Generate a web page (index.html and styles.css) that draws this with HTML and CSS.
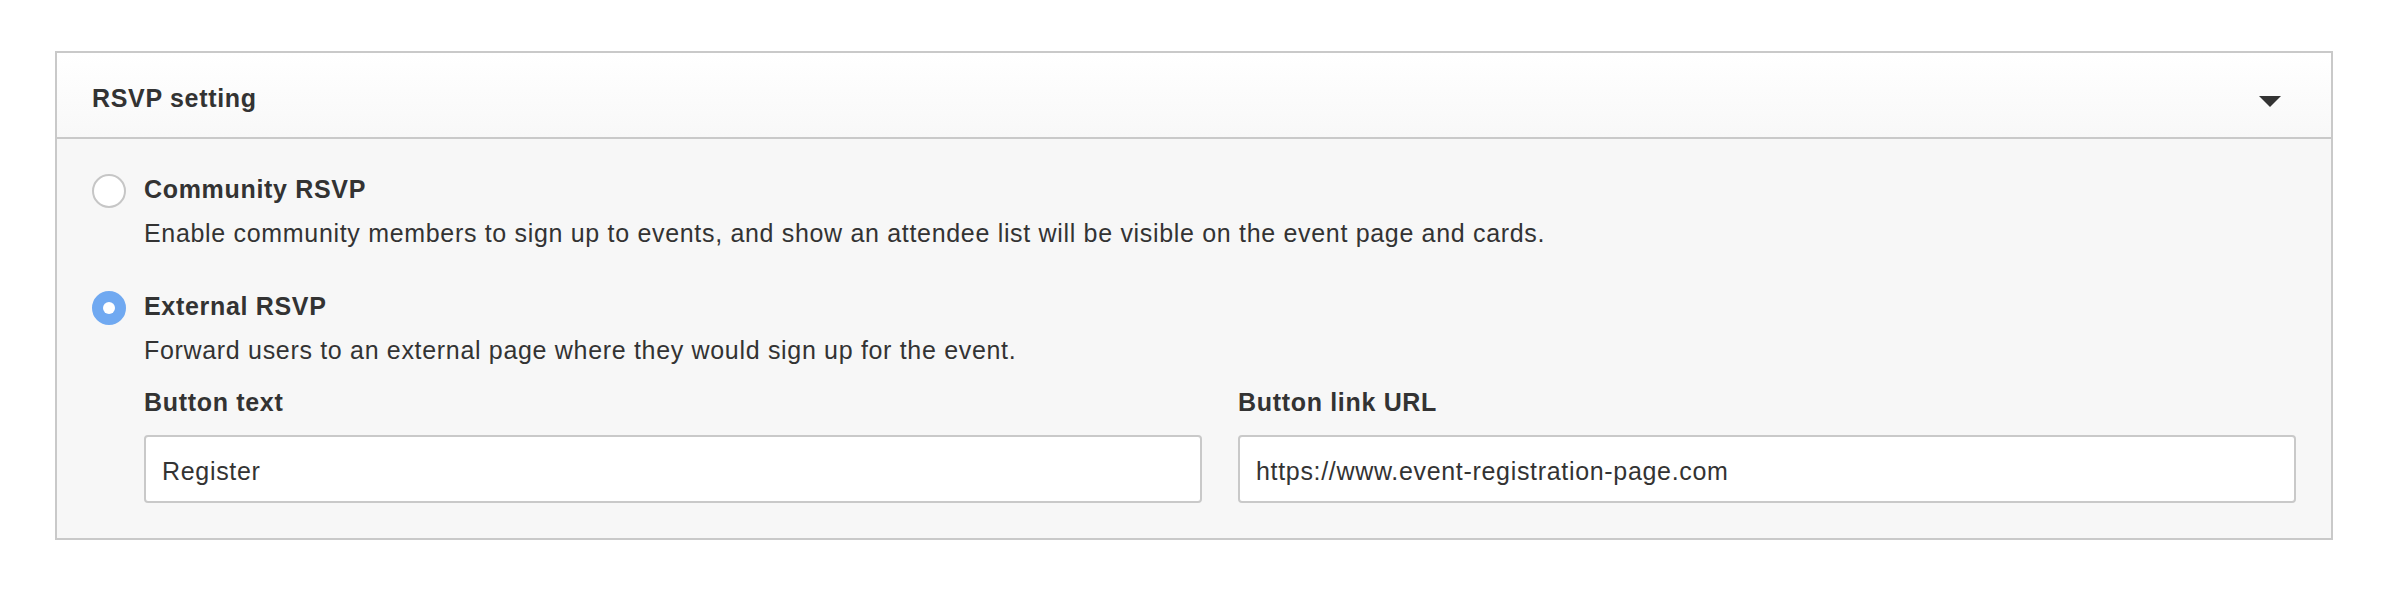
FILE: index.html
```html
<!DOCTYPE html>
<html lang="en">
<head>
<meta charset="utf-8">
<title>RSVP setting</title>
<link rel="stylesheet" href="styles.css">
</head>
<body>
<section class="panel">
  <header class="panel-header">
    <h2 class="panel-title">RSVP setting</h2>
    <svg class="caret" width="22" height="11" viewBox="0 0 22 11" aria-hidden="true"><path d="M0 0 H22 L11 11 Z" fill="#333"/></svg>
  </header>
  <div class="panel-body">
    <div class="option">
      <span class="radio"></span>
      <div class="option-text">
        <div class="option-title">Community RSVP</div>
        <div class="option-desc">Enable community members to sign up to events, and show an attendee list will be visible on the event page and cards.</div>
      </div>
    </div>
    <div class="option option-second">
      <span class="radio radio-checked"></span>
      <div class="option-text">
        <div class="option-title">External RSVP</div>
        <div class="option-desc">Forward users to an external page where they would sign up for the event.</div>
        <div class="fields">
          <label class="field">
            <span class="field-label">Button text</span>
            <input class="field-input" type="text" value="Register">
          </label>
          <label class="field">
            <span class="field-label">Button link URL</span>
            <input class="field-input" type="text" value="https://www.event-registration-page.com">
          </label>
        </div>
      </div>
    </div>
  </div>
</section>
</body>
</html>
```
FILE: styles.css
```css
* { box-sizing: border-box; }

html, body {
  margin: 0;
  background: #ffffff;
}

body {
  font-family: "Liberation Sans", Arial, Helvetica, sans-serif;
  font-size: 25px;
  letter-spacing: 0.68px;
  color: #333333;
  padding: 51px 53px 0 55px;
}

.panel {
  border: 2px solid #c9c9c9;
  background: #f7f7f7;
}

.panel-header {
  display: flex;
  align-items: center;
  justify-content: space-between;
  padding: 25px 50px 19px 35px;
  border-bottom: 2px solid #c9c9c9;
  background: linear-gradient(#ffffff, #f8f8f8);
}

.panel-title {
  margin: 0;
  font-size: 25px;
  font-weight: bold;
  line-height: 40px;
}

.caret {
  display: block;
  margin-top: 6px;
}

.panel-body {
  padding: 30px 35px 35px 35px;
}

.option {
  display: flex;
  align-items: flex-start;
  gap: 18px;
}

.option-second {
  margin-top: 33px;
}

.radio {
  flex: 0 0 34px;
  width: 34px;
  height: 34px;
  margin-top: 5px;
  border-radius: 50%;
  border: 2px solid #c6c6c6;
  background: #ffffff;
  display: flex;
  align-items: center;
  justify-content: center;
}

.radio-checked {
  border-color: #70a9f1;
  background: #70a9f1;
}

.radio-checked::after {
  content: "";
  width: 12px;
  height: 12px;
  border-radius: 50%;
  background: #ffffff;
}

.option-text {
  flex: 1;
  min-width: 0;
}

.option-title {
  font-weight: bold;
  line-height: 40px;
}

.option-desc {
  margin-top: 4px;
  line-height: 40px;
}

.fields {
  display: grid;
  grid-template-columns: 1fr 1fr;
  gap: 36px;
  margin-top: 12px;
}

.field {
  display: flex;
  flex-direction: column;
  gap: 13px;
}

.field-label {
  font-weight: bold;
  line-height: 40px;
}

.field-input {
  display: block;
  width: 100%;
  height: 68px;
  margin: 0;
  padding: 4px 16px 0 16px;
  border: 2px solid #c9c9c9;
  border-radius: 4px;
  background: #ffffff;
  font-family: inherit;
  font-size: 25px;
  letter-spacing: 0.68px;
  color: #333333;
  outline: none;
}
```
